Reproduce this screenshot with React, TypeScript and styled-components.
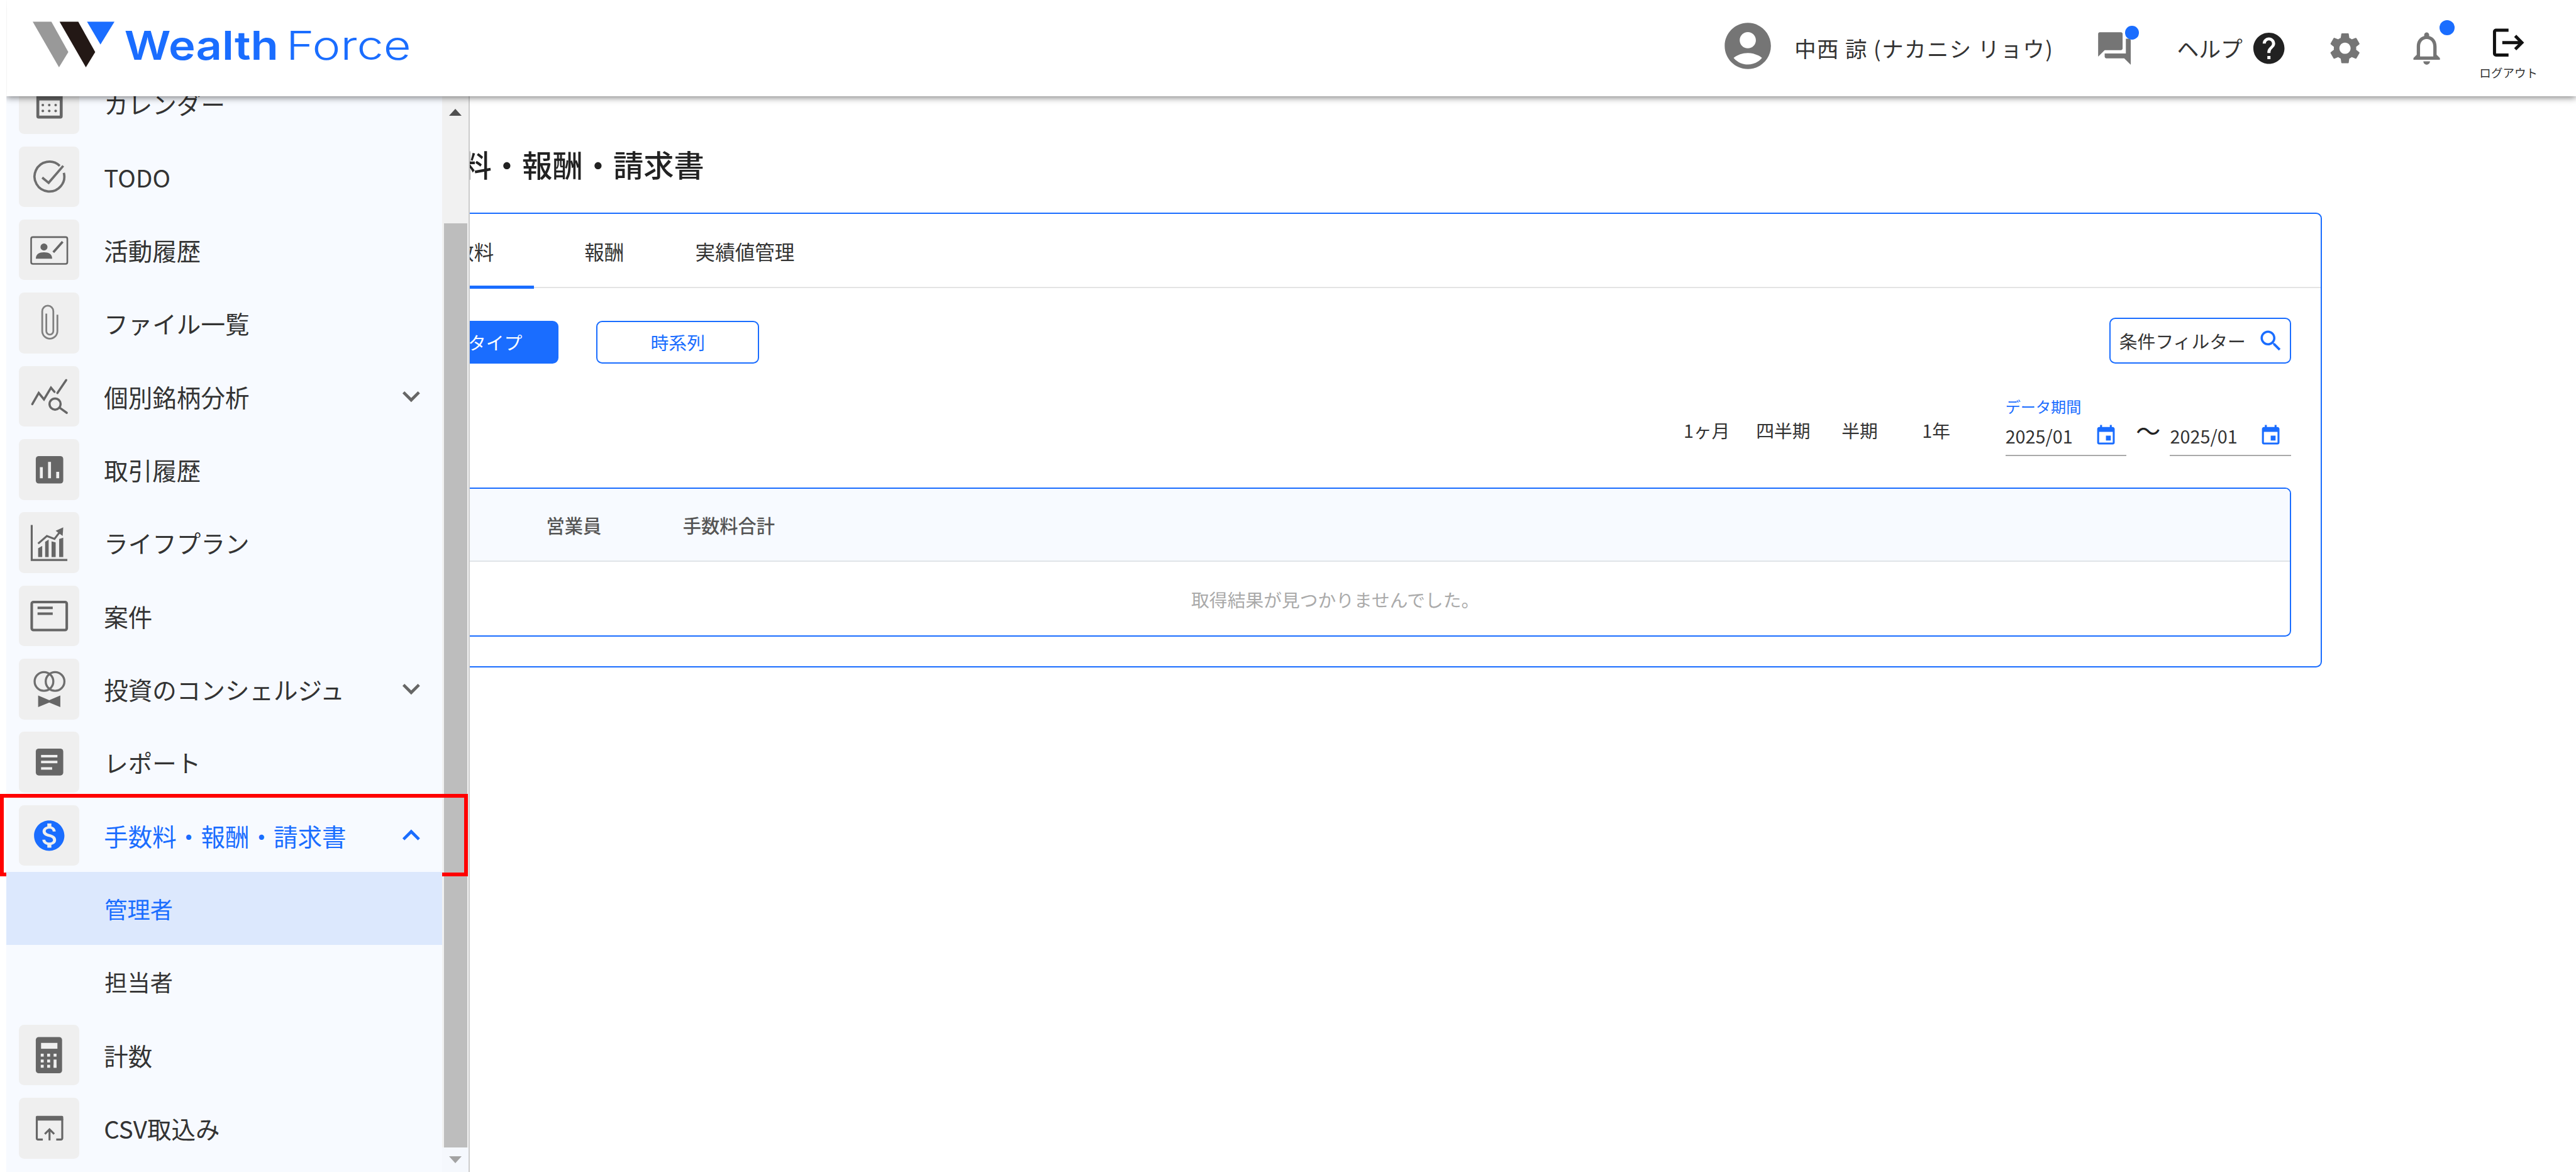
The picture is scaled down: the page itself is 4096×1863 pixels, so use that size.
import React from 'react'
import styled, {createGlobalStyle} from 'styled-components'

// 参照画像の座標(4411幅)をそのまま書けるように縮小する
const u = (n: number) => `${(n * 0.92859).toFixed(2)}px`

const BLUE = '#1a6dff'
const ICON_GRAY = '#666'
const TILE = '#efefef'

const GlobalStyle = createGlobalStyle`
    html, body {
        margin: 0;
        padding: 0;
        background: #fff;
        font-family: "Noto Sans CJK JP", "Noto Sans", sans-serif;
        color: #333;
    }
    * {
        box-sizing: border-box;
    }
`

const Page = styled.div`
    position: relative;
    width: 100vw;
    height: 100vh;
    overflow: hidden;
    background: #fff;
`

/* ---------- header ---------- */
const Header = styled.header`
    position: relative;
    z-index: 3;
    display: flex;
    align-items: center;
    height: ${u(165)};
    margin-left: ${u(11)};
    padding-left: ${u(45)};
    background: #fff;
    box-shadow: 0 ${u(3)} ${u(11)} rgba(0, 0, 0, 0.5);
    clip-path: inset(0 0 ${u(-30)} 0);
`
const LogoSvg = styled.svg`
    display: block;
    width: ${u(660)};
    height: ${u(90)};
    margin-top: ${u(-12)};
`
const HeaderRight = styled.div`
    display: flex;
    align-items: center;
    margin-left: auto;
    height: 100%;
`
const HeaderIcon = styled.svg<{$size: number; $color?: string}>`
    display: block;
    width: ${p => u(p.$size)};
    height: ${p => u(p.$size)};
    fill: ${p => p.$color ?? '#757575'};
    flex: none;
`
const Avatar = styled.div`
    margin-bottom: ${u(7)};
`
const UserName = styled.span`
    margin-left: ${u(32)};
    font-size: ${u(37)};
    letter-spacing: ${u(1.6)};
    line-height: 1;
    white-space: nowrap;
    color: #333;
`
const BadgeWrap = styled.div<{$gap: number}>`
    position: relative;
    margin-left: ${p => u(p.$gap)};
`
const Badge = styled.span<{$top: number; $left: number; $size: number}>`
    position: absolute;
    top: ${p => u(p.$top)};
    left: ${p => u(p.$left)};
    width: ${p => u(p.$size)};
    height: ${p => u(p.$size)};
    border-radius: 50%;
    background: ${BLUE};
`
const HelpLabel = styled.span`
    margin-left: ${u(73)};
    font-size: ${u(37.5)};
    line-height: 1;
    white-space: nowrap;
    color: #333;
`
const HelpIconBox = styled.div`
    margin-left: ${u(13)};
`
const LogoutBox = styled.div`
    display: flex;
    flex-direction: column;
    align-items: center;
    align-self: flex-start;
    width: ${u(101)};
    margin: ${u(41)} ${u(65)} 0 ${u(56)};
`
const LogoutLabel = styled.span`
    margin-top: ${u(7)};
    font-size: ${u(20)};
    line-height: 1.2;
    white-space: nowrap;
    color: #333;
`

/* ---------- side menu ---------- */
const Sidebar = styled.aside`
    position: absolute;
    z-index: 2;
    top: ${u(165)};
    bottom: 0;
    left: ${u(11)};
    display: flex;
    width: ${u(793.5)};
    background: #f7faff;
    border-right: ${u(2.5)} solid #ccc;
`
const Nav = styled.nav`
    position: relative;
    z-index: 1;
    width: ${u(746)};
    flex: none;
`
const NavList = styled.ul`
    list-style: none;
    margin: ${u(-50.5)} 0 0;
    padding: 0;
`
const NavRow = styled.li<{$sub?: boolean; $current?: boolean; $open?: boolean}>`
    position: relative;
    display: flex;
    align-items: center;
    height: ${u(125.3)};
    padding: 0 ${u(23)} 0 ${p => (p.$sub ? u(168) : u(21))};
    background: ${p => (p.$current ? '#dce8fd' : 'transparent')};
    color: ${p => (p.$current || p.$open ? BLUE : '#333')};
`
const Tile = styled.span`
    display: block;
    width: ${u(104)};
    height: ${u(104)};
    margin-right: ${u(42)};
    flex: none;
    border-radius: ${u(9)};
    background: ${TILE};
`
const TileSvg = styled.svg`
    display: block;
    width: 100%;
    height: 100%;
`
const NavLabel = styled.span<{$sub?: boolean}>`
    font-size: ${p => u(p.$sub ? 39 : 41.5)};
    line-height: 1.2;
    white-space: nowrap;
`
const Chevron = styled.svg<{$open?: boolean}>`
    display: block;
    width: ${u(60)};
    height: ${u(60)};
    margin-left: auto;
    fill: ${p => (p.$open ? BLUE : ICON_GRAY)};
`
const RedFrame = styled.span`
    position: absolute;
    top: ${u(-8.5)};
    right: ${u(-43.7)};
    bottom: ${u(-7.8)};
    left: ${u(-11)};
    border: ${u(6.5)} solid #f00;
    pointer-events: none;
`
const ScrollTrack = styled.div`
    display: flex;
    flex-direction: column;
    flex: 1;
    background: #f1f1f1;
`
const ScrollArrow = styled.div<{$down?: boolean}>`
    display: flex;
    align-items: center;
    justify-content: center;
    height: ${p => u(p.$down ? 42 : 54)};
    flex: none;
    background: ${p => (p.$down ? '#f5f8fd' : 'transparent')};

    &::before {
        content: "";
        border-left: ${u(11)} solid transparent;
        border-right: ${u(11)} solid transparent;
        border-bottom: ${p => (p.$down ? '0' : `${u(12)} solid #505050`)};
        border-top: ${p => (p.$down ? `${u(12)} solid #a3a3a3` : '0')};
    }
`
const ScrollThumb = styled.div`
    flex: 1;
    margin: ${u(163)} ${u(2)} 0 ${u(3)};
    background: #bdbdbd;
`

/* ---------- main ---------- */
const Main = styled.main`
    padding: 0 ${u(435)} 0 ${u(585)};
`
const Title = styled.h1`
    margin: ${u(79)} 0 0 ${u(101)};
    font-size: ${u(52)};
    font-weight: 500;
    line-height: ${u(72)};
    color: #222;
`
const Card = styled.section`
    margin-top: ${u(48)};
    border: ${u(3)} solid ${BLUE};
    border-radius: ${u(10)};
    background: #fff;
`
const TabBar = styled.div`
    display: flex;
    height: ${u(127)};
    padding-left: ${u(88)};
    border-bottom: ${u(3)} solid #e4e4e4;
`
const Tab = styled.div<{$active?: boolean}>`
    display: flex;
    align-items: center;
    justify-content: center;
    width: ${u(241)};
    margin-bottom: ${u(-3)};
    padding-top: ${u(4)};
    font-size: ${u(34)};
    color: #333;
    border-bottom: ${u(6)} solid ${p => (p.$active ? BLUE : 'transparent')};

    &:first-child {
        width: ${u(239)};
    }
`
const Panel = styled.div`
    padding: ${u(51)} ${u(51)} ${u(51)};
`
const ToolRow = styled.div`
    display: flex;
    align-items: flex-end;
`
const ModeButton = styled.button<{$primary?: boolean}>`
    display: flex;
    align-items: center;
    justify-content: center;
    width: ${u(279)};
    height: ${u(73)};
    margin-right: ${u(65)};
    padding: 0;
    font-family: inherit;
    font-size: ${u(31)};
    border: ${u(3)} solid ${BLUE};
    border-radius: ${u(10)};
    background: ${p => (p.$primary ? BLUE : '#fff')};
    color: ${p => (p.$primary ? '#fff' : BLUE)};

    &:first-child {
        margin-left: ${u(39)};
    }
`
const FilterBox = styled.div`
    display: flex;
    align-items: center;
    justify-content: space-between;
    width: ${u(311)};
    height: ${u(78)};
    margin-left: auto;
    padding: 0 ${u(9)} 0 ${u(15)};
    font-size: ${u(31)};
    border: ${u(3)} solid ${BLUE};
    border-radius: ${u(10)};
    color: #333;
`
const PeriodRow = styled.div`
    display: flex;
    justify-content: flex-end;
    align-items: flex-end;
    margin-top: ${u(55)};
`
const Presets = styled.div`
    display: flex;
    margin: 0 ${u(53)} ${u(25)} 0;
`
const Preset = styled.span`
    width: ${u(131)};
    font-size: ${u(31)};
    line-height: ${u(40)};
    text-align: center;
    color: #333;
`
const PeriodLabel = styled.div`
    font-size: ${u(26)};
    line-height: ${u(36)};
    color: ${BLUE};
`
const DateRange = styled.div`
    display: flex;
    align-items: stretch;
`
const DateField = styled.div`
    display: flex;
    align-items: center;
    justify-content: space-between;
    width: ${u(207)};
    height: ${u(68)};
    padding-right: ${u(15)};
    font-size: ${u(31)};
    border-bottom: ${u(3)} solid #aaa;
    color: #333;
`
const Tilde = styled.span`
    width: ${u(75)};
    padding-bottom: ${u(22)};
    font-size: ${u(42)};
    line-height: ${u(46)};
    text-align: center;
    color: #222;
`
const DataTable = styled.div`
    margin-top: ${u(53)};
    border: ${u(3)} solid ${BLUE};
    border-radius: ${u(10)};
    overflow: hidden;
`
const TableHead = styled.div`
    display: grid;
    grid-template-columns: ${u(295)} ${u(234)} 1fr;
    align-items: center;
    height: ${u(125)};
    background: #f7faff;
    border-bottom: ${u(3)} solid #e0e4e8;
    font-size: ${u(31.5)};
    font-weight: 500;
    color: #555;
`
const EmptyRow = styled.div`
    display: flex;
    align-items: center;
    justify-content: center;
    height: ${u(126)};
    padding: ${u(2)} 0 0 ${u(12)};
    font-size: ${u(31)};
    color: #aaa;
`

const Icon = {
    calendar: (
        <>
            <rect x="30" y="30" width="45" height="48" rx="4" fill={ICON_GRAY} />
            <rect x="35" y="47" width="35" height="26" fill={TILE} />
            {[41, 52, 63].map(x => [55, 65].map(y => <circle key={`${x}-${y}`} cx={x} cy={y} r="2.2" fill={ICON_GRAY} />))}
        </>
    ),
    todo: (
        <g fill="none" stroke="#6e6e6e" strokeWidth="4">
            <path d="M70 33 A25.5 25.5 0 1 0 77 45" />
            <path d="M40 53 L51 62 L76 33" />
        </g>
    ),
    activity: (
        <>
            <rect x="21" y="30" width="62" height="46" rx="3" fill="none" stroke={ICON_GRAY} strokeWidth="2.8" />
            <circle cx="43" cy="47" r="6" fill={ICON_GRAY} />
            <path d="M29 67 C29 59 35 56 43 56 C51 56 57 59 57 67 Z" fill={ICON_GRAY} />
            <path d="M59 56 L75 38" stroke={ICON_GRAY} strokeWidth="4" />
        </>
    ),
    file: (
        <path
            d="M47 36 V66 a6 6 0 0 0 12 0 V32 a9.5 9.5 0 0 0 -19 0 V66 a13 13 0 0 0 26 0 V38"
            fill="none"
            stroke="#808080"
            strokeWidth="3"
        />
    ),
    analysis: (
        <g fill="none" stroke={ICON_GRAY} strokeWidth="3.8" strokeLinecap="round">
            <path d="M23 65 L34 46 L43 57 L55 37 L61 44" />
            <path d="M66 46 L81 24" />
            <circle cx="62" cy="65" r="9.5" />
            <path d="M71 72 L82 80" />
        </g>
    ),
    trade: (
        <>
            <rect x="29" y="29" width="47" height="47" rx="5" fill={ICON_GRAY} />
            <rect x="36" y="48" width="5" height="19" fill={TILE} />
            <rect x="50" y="39" width="5" height="28" fill={TILE} />
            <rect x="64" y="56" width="5" height="11" fill={TILE} />
        </>
    ),
    life: (
        <>
            <path d="M22 22 V82 H83" fill="none" stroke={ICON_GRAY} strokeWidth="3.4" />
            <path d="M33 77 V62 L40 58 V77 Z M45 77 V51 L51 47 V77 Z M56 77 V50 L63 52 V77 Z M69 77 V46 L76 44 V77 Z" fill={ICON_GRAY} />
            <path d="M33 54 L48 41 L61 46 L71 33" fill="none" stroke={ICON_GRAY} strokeWidth="3.4" />
            <path d="M63 32 L76 26 L75 41 Z" fill={ICON_GRAY} />
        </>
    ),
    project: (
        <g fill="none" stroke={ICON_GRAY} strokeWidth="4.4">
            <rect x="22" y="28" width="60" height="48" rx="3" />
            <path d="M32 38 H58 M32 48 H58" />
        </g>
    ),
    concierge: (
        <>
            <circle cx="43" cy="39" r="16" fill="none" stroke="#6e6e6e" strokeWidth="3.6" />
            <circle cx="62" cy="39" r="16" fill="none" stroke="#6e6e6e" strokeWidth="3.6" />
            <path d="M33 63 L52 71 L71 63 V83 L52 75 L33 83 Z" fill={ICON_GRAY} />
        </>
    ),
    report: (
        <>
            <rect x="29" y="29" width="47" height="46" rx="5" fill={ICON_GRAY} />
            <path d="M38 42 H66 M38 52 H66 M38 63 H57" stroke={TILE} strokeWidth="4.4" />
        </>
    ),
    fee: (
        <path
            transform="translate(20.8 20.8) scale(2.6)"
            fill={BLUE}
            d="M12 2C6.48 2 2 6.48 2 12s4.48 10 10 10 10-4.48 10-10S17.52 2 12 2zm1.41 16.09V20h-2.67v-1.93c-1.71-.36-3.16-1.46-3.27-3.4h1.96c.1 1.05.82 1.87 2.65 1.87 1.96 0 2.4-.98 2.4-1.59 0-.83-.44-1.61-2.67-2.14-2.48-.6-4.18-1.62-4.18-3.67 0-1.72 1.39-2.84 3.11-3.21V4h2.67v1.95c1.86.45 2.79 1.86 2.85 3.39H14.3c-.05-1.11-.64-1.87-2.22-1.87-1.5 0-2.4.68-2.4 1.64 0 .84.65 1.39 2.67 1.91s4.18 1.39 4.18 3.91c-.01 1.83-1.38 2.83-3.12 3.16z"
        />
    ),
    count: (
        <>
            <rect x="29" y="21" width="45" height="62" rx="5" fill={ICON_GRAY} />
            <rect x="38" y="31" width="28" height="10" fill={TILE} />
            {[40, 51, 62].map(x => [52, 62, 71].map(y => <rect key={`${x}-${y}`} x={x - 2.5} y={y - 2.5} width="5" height={x === 62 && y === 62 ? 14 : 5} fill={TILE} />))}
        </>
    ),
    csv: (
        <>
            <rect x="29" y="31" width="47" height="8" rx="2" fill={ICON_GRAY} />
            <path d="M41 71.5 H33 a2.3 2.3 0 0 1 -2.3 -2.3 V36 M64 71.5 H72 a2.3 2.3 0 0 0 2.3 -2.3 V36" fill="none" stroke={ICON_GRAY} strokeWidth="3.4" />
            <path d="M52.5 73 V55 M44.5 62 L52.5 54 L60.5 62" fill="none" stroke={ICON_GRAY} strokeWidth="3.4" />
        </>
    )
}

type MenuItem = {
    label: string
    icon?: keyof typeof Icon
    expand?: boolean
    open?: boolean
    sub?: boolean
    current?: boolean
}

const menuItems: MenuItem[] = [
    {label: 'カレンダー', icon: 'calendar'},
    {label: 'TODO', icon: 'todo'},
    {label: '活動履歴', icon: 'activity'},
    {label: 'ファイル一覧', icon: 'file'},
    {label: '個別銘柄分析', icon: 'analysis', expand: true},
    {label: '取引履歴', icon: 'trade'},
    {label: 'ライフプラン', icon: 'life'},
    {label: '案件', icon: 'project'},
    {label: '投資のコンシェルジュ', icon: 'concierge', expand: true},
    {label: 'レポート', icon: 'report'},
    {label: '手数料・報酬・請求書', icon: 'fee', expand: true, open: true},
    {label: '管理者', sub: true, current: true},
    {label: '担当者', sub: true},
    {label: '計数', icon: 'count'},
    {label: 'CSV取込み', icon: 'csv'}
]

const presets = ['1ヶ月', '四半期', '半期', '1年']

const CalendarIcon = () => (
    <HeaderIcon $size={40} $color={BLUE} viewBox="0 0 24 24">
        <path d="M17 12h-5v5h5v-5zM16 1v2H8V1H6v2H5c-1.11 0-1.99.9-1.99 2L3 19c0 1.1.89 2 2 2h14c1.1 0 2-.9 2-2V5c0-1.1-.9-2-2-2h-1V1h-2zm3 18H5V8h14v11z" />
    </HeaderIcon>
)

export default function App() {
    return (
        <Page>
            <GlobalStyle />
            <Header>
                <LogoSvg viewBox="56 36 660 90">
                    <polygon points="56,42 88,42 117,94 101,120" fill="#999" />
                    <polygon points="102,42 134,42 163,94 147,120" fill="#231815" />
                    <polygon points="149,42 196,42 172,81" fill={BLUE} />
                    <text x="213" y="107" fontFamily="Inter, sans-serif" fontSize="68" fontWeight="600" fill={BLUE} textLength="264" lengthAdjust="spacingAndGlyphs">Wealth</text>
                    <text x="490" y="107" fontFamily="Inter, sans-serif" fontSize="68" fontWeight="300" fill={BLUE} textLength="214" lengthAdjust="spacingAndGlyphs">Force</text>
                </LogoSvg>
                <HeaderRight>
                    <Avatar>
                        <HeaderIcon $size={95} viewBox="0 0 24 24">
                            <path d="M12 2C6.48 2 2 6.48 2 12s4.48 10 10 10 10-4.48 10-10S17.52 2 12 2zm0 4c1.93 0 3.5 1.57 3.5 3.5S13.93 13 12 13s-3.5-1.57-3.5-3.5S10.07 6 12 6zm0 14c-2.03 0-4.43-.82-6.14-2.88C7.55 15.8 9.68 15 12 15s4.45.8 6.14 2.12C16.43 19.18 14.03 20 12 20z" />
                        </HeaderIcon>
                    </Avatar>
                    <UserName>中西 諒 (ナカニシ リョウ)</UserName>
                    <BadgeWrap $gap={71}>
                        <HeaderIcon $size={67} viewBox="0 0 24 24">
                            <path d="M21 6h-2v9H6v2c0 .55.45 1 1 1h11l4 4V7c0-.55-.45-1-1-1zm-4 6V3c0-.55-.45-1-1-1H3c-.55 0-1 .45-1 1v14l4-4h10c.55 0 1-.45 1-1z" />
                        </HeaderIcon>
                        <Badge $top={-4.5} $left={51.5} $size={23} />
                    </BadgeWrap>
                    <HelpLabel>ヘルプ</HelpLabel>
                    <HelpIconBox>
                        <HeaderIcon $size={64} $color="#212121" viewBox="0 0 24 24">
                            <path d="M12 2C6.48 2 2 6.48 2 12s4.48 10 10 10 10-4.48 10-10S17.52 2 12 2zm1 17h-2v-2h2v2zm2.07-7.75l-.9.92C13.45 12.9 13 13.5 13 15h-2v-.5c0-1.1.45-2.1 1.17-2.83l1.24-1.26c.37-.36.59-.86.59-1.41 0-1.1-.9-2-2-2s-2 .9-2 2H8c0-2.21 1.79-4 4-4s4 1.79 4 4c0 .88-.36 1.68-.93 2.25z" />
                        </HeaderIcon>
                    </HelpIconBox>
                    <BadgeWrap $gap={66}>
                        <HeaderIcon $size={64} viewBox="0 0 24 24">
                            <path d="M19.14 12.94c.04-.3.06-.61.06-.94 0-.32-.02-.64-.07-.94l2.03-1.58c.18-.14.23-.41.12-.61l-1.92-3.32c-.12-.22-.37-.29-.59-.22l-2.39.96c-.5-.38-1.03-.7-1.62-.94l-.36-2.54c-.04-.24-.24-.41-.48-.41h-3.84c-.24 0-.43.17-.47.41l-.36 2.54c-.59.24-1.13.57-1.62.94l-2.39-.96c-.22-.08-.47 0-.59.22L2.74 8.87c-.12.21-.08.47.12.61l2.03 1.58c-.05.3-.09.63-.09.94s.02.64.07.94l-2.03 1.58c-.18.14-.23.41-.12.61l1.92 3.32c.12.22.37.29.59.22l2.39-.96c.5.38 1.03.7 1.62.94l.36 2.54c.05.24.24.41.48.41h3.84c.24 0 .44-.17.47-.41l.36-2.54c.59-.24 1.13-.56 1.62-.94l2.39.96c.22.08.47 0 .59-.22l1.92-3.32c.12-.22.07-.47-.12-.61l-2.01-1.58zM12 15.6c-1.98 0-3.6-1.62-3.6-3.6s1.62-3.6 3.6-3.6 3.6 1.62 3.6 3.6-1.62 3.6-3.6 3.6z" />
                        </HeaderIcon>
                    </BadgeWrap>
                    <BadgeWrap $gap={74}>
                        <HeaderIcon $size={68} viewBox="0 0 24 24">
                            <path d="M12 22c1.1 0 2-.9 2-2h-4c0 1.1.9 2 2 2zm6-6v-5c0-3.07-1.63-5.64-4.5-6.32V4c0-.83-.67-1.5-1.5-1.5s-1.5.67-1.5 1.5v.68C7.64 5.36 6 7.92 6 11v5l-2 2v1h16v-1l-2-2zm-2 1H8v-6c0-2.48 1.51-4.5 4-4.5s4 2.02 4 4.5v6z" />
                        </HeaderIcon>
                        <Badge $top={-14.5} $left={56} $size={26} />
                    </BadgeWrap>
                    <LogoutBox>
                        <HeaderIcon $size={64} $color="#111" viewBox="0 0 24 24">
                            <path d="M17 7l-1.41 1.41L18.17 11H8v2h10.17l-2.58 2.58L17 17l5-5zM4 5h8V3H4c-1.1 0-2 .9-2 2v14c0 1.1.9 2 2 2h8v-2H4V5z" />
                        </HeaderIcon>
                        <LogoutLabel>ログアウト</LogoutLabel>
                    </LogoutBox>
                </HeaderRight>
            </Header>

            <Main>
                <Title>手数料・報酬・請求書</Title>
                <Card>
                    <TabBar>
                        <Tab $active>手数料</Tab>
                        <Tab>報酬</Tab>
                        <Tab>実績値管理</Tab>
                    </TabBar>
                    <Panel>
                        <ToolRow>
                            <ModeButton $primary>商品タイプ</ModeButton>
                            <ModeButton>時系列</ModeButton>
                            <FilterBox>
                                条件フィルター
                                <HeaderIcon $size={47} $color={BLUE} viewBox="0 0 24 24">
                                    <path d="M15.5 14h-.79l-.28-.27C15.41 12.59 16 11.11 16 9.5 16 5.91 13.09 3 9.5 3S3 5.91 3 9.5 5.91 16 9.5 16c1.61 0 3.09-.59 4.23-1.57l.27.28v.79l5 4.99L20.49 19l-4.99-5zm-6 0C7.01 14 5 11.99 5 9.5S7.01 5 9.5 5 14 7.01 14 9.5 11.99 14 9.5 14z" />
                                </HeaderIcon>
                            </FilterBox>
                        </ToolRow>
                        <PeriodRow>
                            <Presets>
                                {presets.map(p => <Preset key={p}>{p}</Preset>)}
                            </Presets>
                            <div>
                                <PeriodLabel>データ期間</PeriodLabel>
                                <DateRange>
                                    <DateField>2025/01<CalendarIcon /></DateField>
                                    <Tilde>〜</Tilde>
                                    <DateField>2025/01<CalendarIcon /></DateField>
                                </DateRange>
                            </div>
                        </PeriodRow>
                        <DataTable>
                            <TableHead>
                                <span />
                                <span>営業員</span>
                                <span>手数料合計</span>
                            </TableHead>
                            <EmptyRow>取得結果が見つかりませんでした。</EmptyRow>
                        </DataTable>
                    </Panel>
                </Card>
            </Main>

            <Sidebar>
                <Nav>
                    <NavList>
                        {menuItems.map(item => (
                            <NavRow key={item.label} $sub={item.sub} $current={item.current} $open={item.open}>
                                {item.icon && (
                                    <Tile>
                                        <TileSvg viewBox="0 0 104 104">{Icon[item.icon]}</TileSvg>
                                    </Tile>
                                )}
                                <NavLabel $sub={item.sub}>{item.label}</NavLabel>
                                {item.expand && (
                                    <Chevron $open={item.open} viewBox="0 0 24 24">
                                        <path d={item.open ? 'M12 8l-6 6 1.41 1.41L12 10.83l4.59 4.58L18 14z' : 'M16.59 8.59L12 13.17 7.41 8.59 6 10l6 6 6-6z'} />
                                    </Chevron>
                                )}
                                {item.open && <RedFrame />}
                            </NavRow>
                        ))}
                    </NavList>
                </Nav>
                <ScrollTrack>
                    <ScrollArrow />
                    <ScrollThumb />
                    <ScrollArrow $down />
                </ScrollTrack>
            </Sidebar>
        </Page>
    )
}
